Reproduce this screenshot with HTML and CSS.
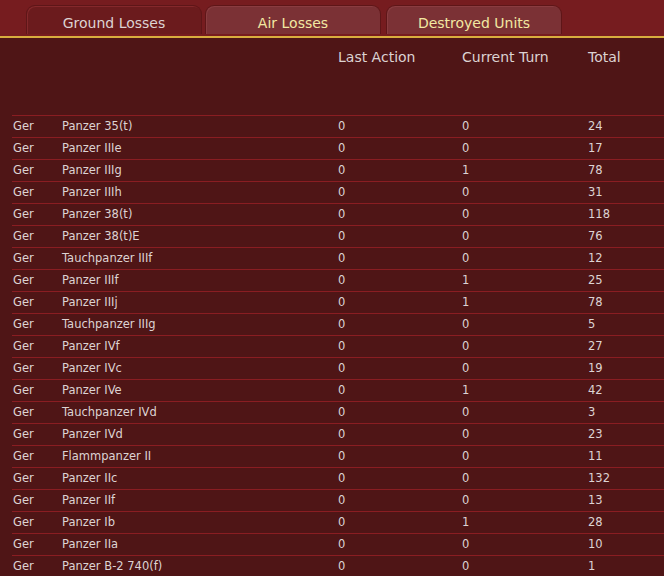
FILE: index.html
```html
<!DOCTYPE html>
<html>
<head>
<meta charset="utf-8">
<link rel="stylesheet" href="styles.css">
</head>
<body>
<div class="tabbar">
  <div class="tab tab-active">Ground Losses</div>
  <div class="tab tab-air">Air Losses</div>
  <div class="tab tab-destroyed">Destroyed Units</div>
</div>
<div class="content">
  <div class="head">
    <span></span><span></span>
    <span>Last Action</span><span>Current Turn</span><span>Total</span>
  </div>
  <div class="rows">
    <div class="row"><span>Ger</span><span>Panzer 35(t)</span><span>0</span><span>0</span><span>24</span></div>
    <div class="row"><span>Ger</span><span>Panzer IIIe</span><span>0</span><span>0</span><span>17</span></div>
    <div class="row"><span>Ger</span><span>Panzer IIIg</span><span>0</span><span>1</span><span>78</span></div>
    <div class="row"><span>Ger</span><span>Panzer IIIh</span><span>0</span><span>0</span><span>31</span></div>
    <div class="row"><span>Ger</span><span>Panzer 38(t)</span><span>0</span><span>0</span><span>118</span></div>
    <div class="row"><span>Ger</span><span>Panzer 38(t)E</span><span>0</span><span>0</span><span>76</span></div>
    <div class="row"><span>Ger</span><span>Tauchpanzer IIIf</span><span>0</span><span>0</span><span>12</span></div>
    <div class="row"><span>Ger</span><span>Panzer IIIf</span><span>0</span><span>1</span><span>25</span></div>
    <div class="row"><span>Ger</span><span>Panzer IIIj</span><span>0</span><span>1</span><span>78</span></div>
    <div class="row"><span>Ger</span><span>Tauchpanzer IIIg</span><span>0</span><span>0</span><span>5</span></div>
    <div class="row"><span>Ger</span><span>Panzer IVf</span><span>0</span><span>0</span><span>27</span></div>
    <div class="row"><span>Ger</span><span>Panzer IVc</span><span>0</span><span>0</span><span>19</span></div>
    <div class="row"><span>Ger</span><span>Panzer IVe</span><span>0</span><span>1</span><span>42</span></div>
    <div class="row"><span>Ger</span><span>Tauchpanzer IVd</span><span>0</span><span>0</span><span>3</span></div>
    <div class="row"><span>Ger</span><span>Panzer IVd</span><span>0</span><span>0</span><span>23</span></div>
    <div class="row"><span>Ger</span><span>Flammpanzer II</span><span>0</span><span>0</span><span>11</span></div>
    <div class="row"><span>Ger</span><span>Panzer IIc</span><span>0</span><span>0</span><span>132</span></div>
    <div class="row"><span>Ger</span><span>Panzer IIf</span><span>0</span><span>0</span><span>13</span></div>
    <div class="row"><span>Ger</span><span>Panzer Ib</span><span>0</span><span>1</span><span>28</span></div>
    <div class="row"><span>Ger</span><span>Panzer IIa</span><span>0</span><span>0</span><span>10</span></div>
    <div class="row"><span>Ger</span><span>Panzer B-2 740(f)</span><span>0</span><span>0</span><span>1</span></div>
  </div>
</div>
</body>
</html>
```

FILE: styles.css
```css
html, body {
  margin: 0;
  padding: 0;
  height: 100%;
  overflow: hidden;
}
body {
  background: #4f1516;
  font-family: "DejaVu Sans", Verdana, sans-serif;
}
.tabbar {
  height: 34px;
  background: #761c1f;
  display: flex;
  align-items: flex-end;
  padding-left: 26px;
  gap: 3px;
  border-bottom: 2px solid #761c1f;
  box-shadow: 0 2px 0 #d8ad3e;
  margin-bottom: 2px;
}
.tab {
  width: 176px;
  height: 29px;
  box-sizing: border-box;
  border-radius: 9px 9px 0 0;
  font-size: 14px;
  text-align: center;
  line-height: 22px;
  padding-top: 6px;
  border: 1px solid #5e1618;
  border-bottom: none;
}
.tab-active {
  background: #6b1b1d;
  color: #ddd3d3;
  box-shadow: inset 1px 1px 0 #84282b;
}
.tab-air, .tab-destroyed {
  background: #7b3135;
  color: #f2e8a2;
  box-shadow: inset 1px 1px 0 #8a3c40;
}
.tab-destroyed {
  margin-left: 2px;
}
.content {
  padding-left: 12px;
}
.head, .row {
  display: grid;
  grid-template-columns: 50px 276px 124px 126px 1fr;
}
.head {
  height: 77px;
  box-sizing: border-box;
  padding-top: 11px;
  font-size: 14px;
  color: #dcd2d2;
}
.row {
  height: 22px;
  box-sizing: border-box;
  border-top: 1px solid #8a1d22;
  font-size: 11.5px;
  line-height: 21px;
  color: #ddd3d3;
}
.row span:first-child {
  padding-left: 1px;
}
```
